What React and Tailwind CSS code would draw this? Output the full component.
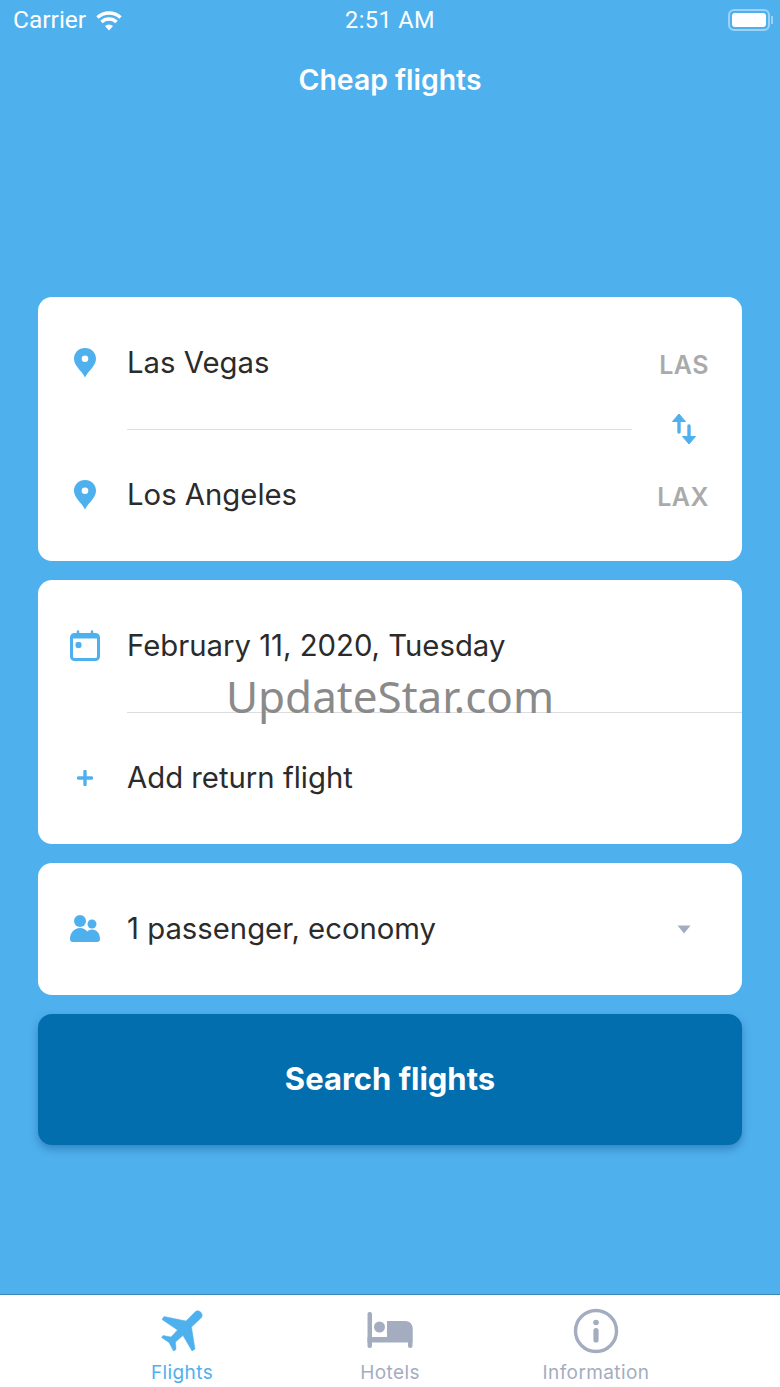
const BLUE = '#4fb0ee';

function PinIcon() {
  return (
    <svg width="24" height="32" viewBox="0 0 24 32" className="shrink-0">
      <path
        fillRule="evenodd"
        d="M12 1C5.7 1 1 5.7 1 11.8c0 3.6 1.7 6.3 4 9.200 2.300 2.900 5 5.500 7 9.500 2-4 4.700-6.600 7-9.500 2.300-2.900 4-5.600 4-9.200C23 5.700 18.300 1 12 1zm0 7.500a3.300 3.300 0 1 1 0 6.600 3.300 3.300 0 0 1 0-6.600z"
        fill={BLUE}
      />
    </svg>
  );
}

function SwapIcon() {
  return (
    <svg width="26" height="32" viewBox="0 0 26 32">
      <path d="M8 4.500V19" stroke={BLUE} strokeWidth="3.400" strokeLinecap="round" fill="none" />
      <path d="M8 1L14.500 8.500H1.500z" fill={BLUE} stroke={BLUE} strokeWidth="1" strokeLinejoin="round" />
      <path d="M18 13V27.500" stroke={BLUE} strokeWidth="3.400" strokeLinecap="round" fill="none" />
      <path d="M18 31L11.500 23.500H24.500z" fill={BLUE} stroke={BLUE} strokeWidth="1" strokeLinejoin="round" />
    </svg>
  );
}

function CalendarIcon() {
  return (
    <svg width="32" height="32" viewBox="0 0 32 32" className="shrink-0">
      <rect x="2.500" y="4.500" width="27" height="25" rx="3" fill="none" stroke={BLUE} strokeWidth="3" />
      <rect x="2.500" y="4.500" width="27" height="4" fill={BLUE} />
      <path d="M9 1.500V6M23 1.500V6" stroke={BLUE} strokeWidth="2.500" strokeLinecap="round" />
      <rect x="6.500" y="12" width="6" height="6" rx="2" fill={BLUE} />
    </svg>
  );
}

function PlusIcon() {
  return (
    <svg width="16" height="16" viewBox="0 0 16 16" className="shrink-0">
      <path d="M8 1.500V14.500M1.500 8H14.500" stroke={BLUE} strokeWidth="3.400" strokeLinecap="round" />
    </svg>
  );
}

function PeopleIcon() {
  return (
    <svg width="32" height="30" viewBox="0 0 32 30" className="shrink-0">
      <circle cx="11" cy="7" r="6" fill={BLUE} />
      <circle cx="23" cy="10" r="4.500" fill={BLUE} />
      <path d="M1 25c0-6 4-11 10-11 3.200 0 5.600 1.300 7.200 3.400 1.300-1.300 3-2 4.800-2 4.700 0 8 4 8 9.600 0 1.800-1 3-3 3H3.500C2 28 1 27 1 25z" fill={BLUE} />
    </svg>
  );
}

function PlaneIcon() {
  return (
    <svg width="42" height="42" viewBox="0 0 42 42">
      <path
        d="M34.500 1.500L25 11 3 6.500 1 9.500 16.500 20 10 27 2 25.500 0.500 27.500 8 32.500 12.500 41 15 39.500 14.500 32 22 25.500 31 41 34 39 30.500 17 40.500 7.500C43 4 38 -1 34.500 1.500z"
        fill={BLUE}
        stroke={BLUE}
        strokeWidth="0.500"
        strokeLinejoin="round"
      />
    </svg>
  );
}

function BedIcon() {
  return (
    <svg width="46" height="38" viewBox="0 0 46 38">
      <rect x="0.500" y="0" width="4.500" height="36" rx="2" fill="#a3adbf" />
      <rect x="0.500" y="25" width="45" height="5.500" fill="#a3adbf" />
      <rect x="41" y="14" width="4.500" height="22" rx="2" fill="#a3adbf" />
      <path d="M20 9h18c4.500 0 7.500 3 7.500 7v9H20z" fill="#a3adbf" />
      <circle cx="12.500" cy="15" r="5.500" fill="#a3adbf" />
    </svg>
  );
}

function InfoIcon() {
  return (
    <svg width="46" height="46" viewBox="0 0 46 46">
      <circle cx="23" cy="23" r="20.500" fill="none" stroke="#a3adbf" strokeWidth="3.400" />
      <circle cx="23" cy="14.500" r="2.800" fill="#a3adbf" />
      <rect x="20.400" y="20" width="5.200" height="14.500" rx="2.600" fill="#a3adbf" />
    </svg>
  );
}

function Row({ icon, text, right }) {
  return (
    <div className="flex items-center h-[132px]">
      <div className="w-[89px] flex justify-center pl-[5px]">{icon}</div>
      <span className="flex-1 text-[29.3px] leading-[40px] text-[#2b2b2b]">{text}</span>
      {right}
    </div>
  );
}

function Code({ children }) {
  return <span className="mr-[33px] mt-[5px] text-[25px] font-semibold tracking-[0.5px] text-[#aaaaaa]">{children}</span>;
}

function Card({ children }) {
  return <div className="bg-white rounded-[14px] overflow-hidden">{children}</div>;
}

function Tab({ icon, label, active, width }) {
  return (
    <div className={`${width} flex flex-col items-center`}>
      <div className="h-[52px] flex items-center justify-center">{icon}</div>
      <span className={`mt-[4px] text-[19px] tracking-[0.4px] ${active ? 'text-[#4fb0ee]' : 'text-[#a3adbf]'}`}>{label}</span>
    </div>
  );
}

export default function App() {
  return (
    <div className="relative w-[780px] h-[1387px] flex flex-col bg-[#4fb0ee] font-['Inter',sans-serif]">
      {/* status bar */}
      <div className="h-10 flex items-center justify-between pl-[13px] pr-[7px] text-white">
        <div className="w-[200px] flex items-center gap-[9px]">
          <span className="font-['Roboto',sans-serif] text-[24.5px]">Carrier</span>
          <svg width="28" height="23" viewBox="0 0 28 22">
            <path d="M14 21L10 16.500a6 6 0 0 1 8 0z" fill="white" />
            <path d="M6.500 12.500a11 11 0 0 1 15 0" stroke="white" strokeWidth="3.500" fill="none" />
            <path d="M2.500 8a17 17 0 0 1 23 0" stroke="white" strokeWidth="3.500" fill="none" />
          </svg>
        </div>
        <span className="mt-[2px] font-['Roboto',sans-serif] text-[23.500px] tracking-[0.4px]">2:51 AM</span>
        <div className="w-[206px] flex justify-end items-center">
          <div className="w-[42px] h-[22px] rounded-[6px] border-2 border-[#9bd2f5] p-[2px]">
            <div className="w-full h-full rounded-[3px] bg-white" />
          </div>
          <div className="w-[2px] h-[8px] bg-[#9bd2f5] ml-px" />
        </div>
      </div>

      {/* nav title */}
      <div className="h-20 flex items-center justify-center text-white text-[28.4px] font-semibold">
        Cheap flights
      </div>

      {/* form */}
      <div className="mt-[177px] mx-[38px] flex flex-col gap-[19px]">
        <Card>
          <Row icon={<PinIcon />} text="Las Vegas" right={<Code>LAS</Code>} />
          <div className="relative ml-[89px] w-[505px] h-px bg-[#dddddd]">
            <div className="absolute left-[544px] top-[-16px]">
              <SwapIcon />
            </div>
          </div>
          <div className="-mt-px">
            <Row icon={<PinIcon />} text="Los Angeles" right={<Code>LAX</Code>} />
          </div>
        </Card>

        <Card>
          <Row icon={<CalendarIcon />} text="February 11, 2020, Tuesday" />
          <div className="ml-[89px] h-px bg-[#dddddd]" />
          <div className="-mt-px">
            <Row icon={<PlusIcon />} text="Add return flight" />
          </div>
        </Card>

        <Card>
          <Row
            icon={<PeopleIcon />}
            text="1 passenger, economy"
            right={
              <svg width="14" height="9" viewBox="0 0 14 9" className="mr-[51px]">
                <path d="M0.500 0.500H13.500L7 8.500z" fill="#a3adbf" />
              </svg>
            }
          />
        </Card>

        <div className="h-[131px] flex items-center justify-center rounded-[14px] bg-[#036eae] text-white text-[31px] font-bold shadow-[0_4px_8px_rgba(0,50,110,0.35)]">
          Search flights
        </div>
      </div>

      {/* tab bar */}
      <div className="mt-auto h-[93px] flex pl-[78px] pt-[12px] bg-white border-t border-[#3d87b8]">
        <Tab width="w-[208px]" icon={<PlaneIcon />} label="Flights" active />
        <Tab width="w-[208px]" icon={<BedIcon />} label="Hotels" />
        <Tab width="w-[204px]" icon={<InfoIcon />} label="Information" />
      </div>

      {/* watermark */}
      <div className="absolute left-0 right-0 top-[665px] text-center text-[44px] leading-[62px] text-[#8a8a8a] font-['Noto_Sans',sans-serif]">
        UpdateStar.com
      </div>
    </div>
  );
}
